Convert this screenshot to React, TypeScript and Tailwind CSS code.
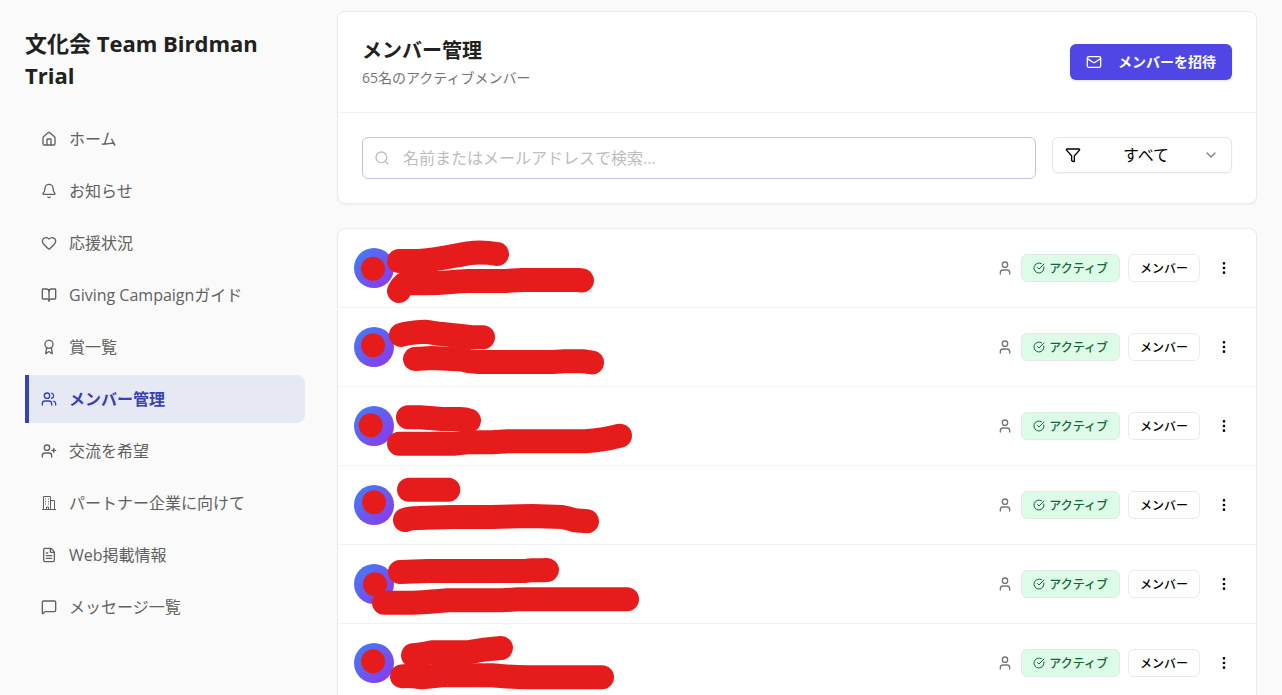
import type { ComponentType } from 'react';
import {
    Award,
    Bell,
    BookOpen,
    ChevronDown,
    CircleCheckBig,
    EllipsisVertical,
    FileText,
    Funnel,
    Heart,
    House,
    Mail,
    MessageSquare,
    Search,
    User,
    UserPlus,
    Users,
} from 'lucide-react';

interface IconProps {
    className?: string;
    strokeWidth?: number;
}

// Office block with a lower annex, not part of lucide
function BuildingIcon({ className }: IconProps) {
    return (
        <svg className={className} viewBox="0 0 16 16" fill="none" stroke="currentColor" strokeWidth="1" aria-hidden="true">
            <path d="M1 14.5h14M2.5 14.5v-13h7v13M9.5 5.5h4v9M5.5 14.5v-2.5h2v2.5" />
            <path d="M4 4h1M7 4h1M4 6.5h1M7 6.5h1M4 9h1M7 9h1" />
        </svg>
    );
}

interface NavItem {
    label: string;
    icon: ComponentType<IconProps>;
    active?: boolean;
}

const navItems: NavItem[] = [
    { label: 'ホーム', icon: House },
    { label: 'お知らせ', icon: Bell },
    { label: '応援状況', icon: Heart },
    { label: 'Giving Campaignガイド', icon: BookOpen },
    { label: '賞一覧', icon: Award },
    { label: 'メンバー管理', icon: Users, active: true },
    { label: '交流を希望', icon: UserPlus },
    { label: 'パートナー企業に向けて', icon: BuildingIcon },
    { label: 'Web掲載情報', icon: FileText },
    { label: 'メッセージ一覧', icon: MessageSquare },
];

// Marker strokes that hide each member's initial, name and address
const members = [
    {
        id: 1,
        strokes: [
            'M35 39.7h.01',
            'M61 32H80C98 31 114 27 130 24.3Q144 22.5 159 25',
            'M61 62Q66 53 72 54C105 55.5 110 52.5 130 52H167L184 51H240L244 51.5',
        ],
    },
    {
        id: 2,
        strokes: [
            'M35 37.3h.01',
            'M63 27Q70 24.5 87 23.7C94 24 98 26 104 26L134 29.3H145',
            'M77 51L94 50L124 51.5Q132 54 140 54H214L227 53.3H246L254 54.5',
        ],
    },
    {
        id: 3,
        strokes: [
            'M32.7 38.3h.01',
            'M70 30.3H82L104 32H122Q127 32 131 33.5',
            'M61 56.7H117L129 55.3H154L170 54.3H247Q264 53.5 282 48.7',
        ],
    },
    {
        id: 4,
        strokes: [
            'M36 36.3h.01',
            'M71 23.7H110.3',
            'M67 54Q72 52 80 52L114 51H154L194 50L224 51Q230 52 237 54.3L249 55.3',
        ],
    },
    {
        id: 5,
        strokes: [
            'M37 39.3h.01',
            'M62 27L90 26H187Q191 25.3 194 25.3H205L209 25',
            'M46 57.7H74Q84 57.5 110 55.3H164L180 54.3H289',
        ],
    },
    {
        id: 6,
        strokes: [
            'M35 37.3h.01',
            'M75 31.3Q80 31 94 28.3H130Q146 25 163 24',
            'M64 52.3Q70 51.5 84 53.3L104 51.3H154Q170 53 190 53.3H264',
        ],
    },
];

function Sidebar() {
    return (
        <aside className="w-[280px] shrink-0 pt-4">
            <h2 className="mb-6 text-[22px] leading-8 font-bold text-[#212121]">文化会 Team Birdman Trial</h2>
            <nav className="flex flex-col gap-1">
                {navItems.map(({ label, icon: Icon, active }) => (
                    <a
                        key={label}
                        href="#"
                        aria-current={active ? 'page' : undefined}
                        className={
                            active
                                ? 'flex h-12 items-center gap-3 rounded-r-lg border-l-4 border-[#3843b0] bg-[#e6e8f4] pl-3 font-bold text-[#3843b0]'
                                : 'flex h-12 items-center gap-3 rounded-lg pl-4 text-[#616161]'
                        }
                    >
                        <Icon className="size-4" strokeWidth={2} />
                        {label}
                    </a>
                ))}
            </nav>
        </aside>
    );
}

function MemberRow({ strokes }: { strokes: string[] }) {
    return (
        <li className="relative flex items-center justify-between border-b border-[#f3f3f3] px-4 py-[19px]">
            <div className="size-10 rounded-full bg-linear-to-br/srgb from-[#3b82f6] to-[#9333ea]" />
            <svg
                className="pointer-events-none absolute top-0 left-0"
                width="310"
                height="78"
                viewBox="0 0 310 78"
                fill="none"
                stroke="#e61c1c"
                strokeWidth="24"
                strokeLinecap="round"
                strokeLinejoin="round"
                aria-hidden="true"
            >
                {strokes.map((d) => (
                    <path key={d} d={d} />
                ))}
            </svg>
            <div className="flex items-center gap-2 font-['Noto_Sans_CJK_JP',sans-serif] text-xs font-medium">
                <User className="size-4 text-[#757575]" />
                <span className="flex h-7 items-center gap-1 rounded-md border border-[#e5e9e6] bg-[#dcfce7] px-[11px] text-[#166534]">
                    <CircleCheckBig className="size-3" />
                    アクティブ
                </span>
                <span className="flex h-7 items-center rounded-md border border-[#ebebeb] px-[11px] text-black">
                    メンバー
                </span>
                <button type="button" aria-label="メニュー" className="flex size-8 items-center justify-center text-black">
                    <EllipsisVertical className="size-4" />
                </button>
            </div>
        </li>
    );
}

export default function App() {
    return (
        <div className="h-screen overflow-hidden bg-[#fafafa] font-['Open_Sans','Noto_Sans_CJK_JP',sans-serif] text-base">
            <div className="mx-auto flex max-w-[1280px] gap-8 px-6 pt-[11px]">
                <Sidebar />
                <main className="flex min-w-0 flex-1 flex-col gap-6">
                    <section className="rounded-lg border border-[#ebebeb] bg-white shadow-xs">
                        <div className="flex items-center justify-between border-b border-[#f3f3f3] p-6">
                            <div className="flex flex-col gap-1">
                                <h1 className="font-['Noto_Sans_CJK_JP',sans-serif] text-xl leading-7 font-bold text-[#212121]">
                                    メンバー管理
                                </h1>
                                <p className="text-sm text-[#757575]">65名のアクティブメンバー</p>
                            </div>
                            <button
                                type="button"
                                className="flex h-9 items-center gap-4 rounded-md bg-[#4f46e5] px-4 text-sm font-bold text-white shadow-sm"
                            >
                                <Mail className="size-4" />
                                メンバーを招待
                            </button>
                        </div>
                        <div className="flex items-start gap-4 p-6">
                            <label className="flex h-[42px] flex-1 items-center gap-[13px] rounded-md border border-[#c0c3e8] px-[11px]">
                                <Search className="size-4 text-[#bdbdbd]" />
                                <input
                                    type="text"
                                    aria-label="メンバーを検索"
                                    placeholder="名前またはメールアドレスで検索..."
                                    className="min-w-0 flex-1 outline-none placeholder:text-[#bdbdbd]"
                                />
                            </label>
                            <label className="flex h-9 w-[180px] items-center rounded-md border border-[#e5e5e5] px-3 shadow-xs">
                                <Funnel className="size-4 text-black" />
                                <select
                                    aria-label="絞り込み"
                                    defaultValue="all"
                                    className="min-w-0 flex-1 appearance-none pl-2 text-center text-base text-black outline-none"
                                >
                                    <option value="all">すべて</option>
                                    <option value="active">アクティブ</option>
                                </select>
                                <ChevronDown className="size-4 text-[#808080]" />
                            </label>
                        </div>
                    </section>
                    <ul className="rounded-lg border border-[#ebebeb] bg-white shadow-xs">
                        {members.map((member) => (
                            <MemberRow key={member.id} strokes={member.strokes} />
                        ))}
                    </ul>
                </main>
            </div>
        </div>
    );
}
